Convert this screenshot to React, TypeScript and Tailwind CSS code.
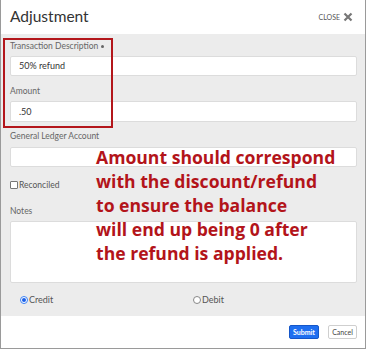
import React from "react";

const lato = { fontFamily: "Lato, 'Open Sans', sans-serif" };

export default function App() {
  return (
    <div className="relative w-[367px] h-[350px] bg-white overflow-hidden" style={lato}>
      <div className="flex flex-col w-[366px] h-[349px] border-x border-b border-[#9a9a9a] bg-white">
        {/* Header */}
        <div className="h-[34px] flex items-center justify-between pl-[9px] pr-[12px] shrink-0">
          <span className="text-[15.5px] text-[#333] leading-none" style={{ fontFamily: "Lato, sans-serif" }}>Adjustment</span>
          <span className="flex items-center gap-[3px] text-[7px] text-[#555]">
            CLOSE
            <svg width="10" height="10" viewBox="0 0 10 10">
              <path d="M1.5 1.5 L8.5 8.5 M8.5 1.5 L1.5 8.5" stroke="#777" strokeWidth="2.2" strokeLinecap="butt" />
            </svg>
          </span>
        </div>
        {/* Body */}
        <div className="bg-[#ececec] flex-1 flex flex-col px-[9px] pt-[7px]">
          <label className="text-[8.5px] text-[#666] leading-[11px] h-[11px] flex items-center gap-[3px]">
            Transaction Description <span className="w-[3px] h-[3px] rounded-full bg-[#666] inline-block" />
          </label>
          <div className="mt-[4px] h-[20px] w-[347px] bg-white border border-[#dcdcdc] rounded-[2px] flex items-center px-[8px] text-[9px] text-[#333]">50% refund</div>
          <label className="mt-[10px] text-[8.5px] text-[#666] leading-[11px] h-[11px]">Amount</label>
          <div className="mt-[4px] h-[21px] w-[347px] bg-white border border-[#dcdcdc] rounded-[2px] flex items-center px-[8px] text-[9px] text-[#333]">.50</div>
          <label className="mt-[9px] text-[8.5px] text-[#666] leading-[11px] h-[11px]">General Ledger Account</label>
          <div className="mt-[5px] h-[20px] w-[347px] bg-white border border-[#dcdcdc] rounded-[2px]" />
          <div className="mt-[13px] flex items-center gap-[1px] h-[10px]">
            <span className="w-[8px] h-[8px] border border-[#777] rounded-[1px] bg-white inline-block" />
            <span className="text-[8.5px] text-[#555]">Reconciled</span>
          </div>
          <label className="mt-[16px] text-[8.5px] text-[#666] leading-[11px] h-[11px]">Notes</label>
          <div className="mt-[4px] h-[62px] w-[347px] bg-white border border-[#dcdcdc] rounded-[2px]" />
          <div className="mt-[12px] flex items-center h-[10px]">
            <div className="w-[183px] pl-[10px] flex items-center gap-[1px]">
              <span className="w-[8px] h-[8px] rounded-full border border-[#3b82f6] bg-white flex items-center justify-center">
                <span className="w-[4px] h-[4px] rounded-full bg-[#1a5fe8]" />
              </span>
              <span className="text-[9px] text-[#555]">Credit</span>
            </div>
            <div className="flex items-center gap-[1px]">
              <span className="w-[8px] h-[8px] rounded-full border border-[#888] bg-white" />
              <span className="text-[9px] text-[#555]">Debit</span>
            </div>
          </div>
        </div>
        {/* Footer */}
        <div className="h-[32px] shrink-0 flex items-center justify-end gap-[9px] pr-[8px]">
          <button className="h-[14px] w-[30px] bg-[#1f6ff0] border border-[#1556c8] rounded-[2px] text-white text-[7px] font-bold flex items-center justify-center">Submit</button>
          <button className="h-[14px] w-[29px] bg-white border border-[#cfcfcf] rounded-[2px] text-[#444] text-[7px] flex items-center justify-center">Cancel</button>
        </div>
      </div>
      {/* Red highlight box */}
      <div className="absolute left-[3px] top-[38px] w-[110px] h-[90px] border-2 border-[#b3161b]" />
      {/* Annotation */}
      <div
        className="absolute left-[96px] top-[145px] text-[17.6px] leading-[24px] font-bold text-[#b3141a]"
        style={{ fontFamily: "'Open Sans', sans-serif" }}
      >
        <div>Amount should correspond</div>
        <div>with the discount/refund</div>
        <div>to ensure the balance</div>
        <div>will end up being 0 after</div>
        <div>the refund is applied.</div>
      </div>
    </div>
  );
}
